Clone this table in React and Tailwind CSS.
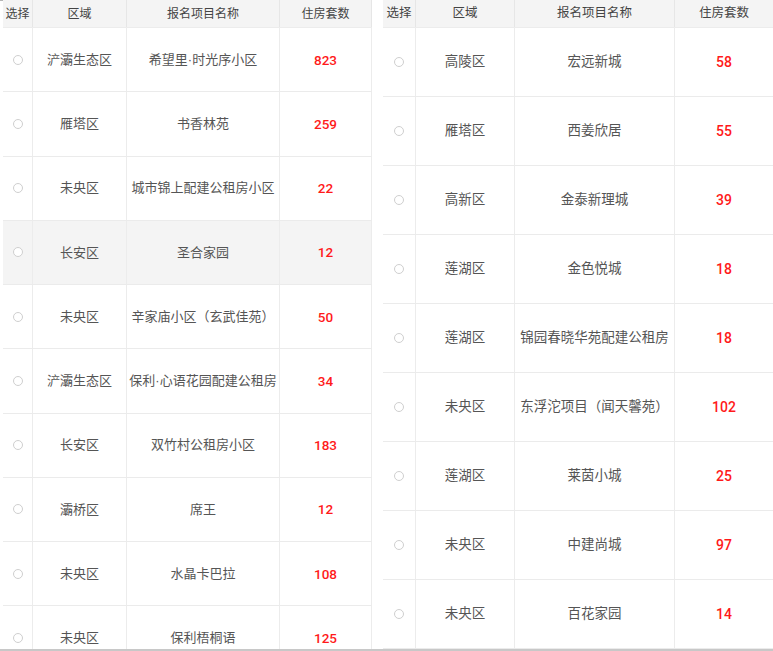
import React from "react";

const left = [
  ["浐灞生态区", "希望里·时光序小区", "823"],
  ["雁塔区", "书香林苑", "259"],
  ["未央区", "城市锦上配建公租房小区", "22"],
  ["长安区", "圣合家园", "12"],
  ["未央区", "辛家庙小区（玄武佳苑）", "50"],
  ["浐灞生态区", "保利·心语花园配建公租房", "34"],
  ["长安区", "双竹村公租房小区", "183"],
  ["灞桥区", "席王", "12"],
  ["未央区", "水晶卡巴拉", "108"],
  ["未央区", "保利梧桐语", "125"],
];

const right = [
  ["高陵区", "宏远新城", "58"],
  ["雁塔区", "西姜欣居", "55"],
  ["高新区", "金泰新理城", "39"],
  ["莲湖区", "金色悦城", "18"],
  ["莲湖区", "锦园春晓华苑配建公租房", "18"],
  ["未央区", "东浮沱项目（闻天馨苑）", "102"],
  ["莲湖区", "莱茵小城", "25"],
  ["未央区", "中建尚城", "97"],
  ["未央区", "百花家园", "14"],
];

const font = { fontFamily: '"Liberation Sans", "Noto Sans CJK SC", sans-serif' };
const numFont = { fontFamily: 'Roboto, "Liberation Sans", sans-serif' };

function Radio() {
  return <span className="block w-[10px] h-[10px] rounded-full border border-[#cfcfcf] bg-white" />;
}

function LeftTable() {
  return (
    <div className="w-[369px] ml-[3px] shrink-0 flex flex-col">
      <div className="flex h-[28px] bg-[#f4f4f4] text-[12px] text-[#444] border-b border-[#ececec]">
        <div className="w-[30px] border-r border-[#e6e6e6] flex items-center justify-center">选择</div>
        <div className="w-[94px] border-r border-[#e6e6e6] flex items-center justify-center">区域</div>
        <div className="w-[153px] border-r border-[#e6e6e6] flex items-center justify-center">报名项目名称</div>
        <div className="w-[92px] border-r border-[#e6e6e6] flex items-center justify-center">住房套数</div>
      </div>
      {left.map((r, i) => (
        <div
          key={i}
          className={`flex h-[64.25px] shrink-0 border-b border-[#ebebeb] text-[13px] text-[#555] ${i === 3 ? "bg-[#f4f4f4]" : "bg-white"}`}
        >
          <div className="w-[30px] border-r border-[#ececec] flex items-center justify-center"><Radio /></div>
          <div className="w-[94px] border-r border-[#ececec] flex items-center justify-center whitespace-nowrap">{r[0]}</div>
          <div className="w-[153px] border-r border-[#ececec] flex items-center justify-center whitespace-nowrap">{r[1]}</div>
          <div className="w-[92px] border-r border-[#ececec] flex items-center justify-center text-[#ff1a1a] font-medium text-[13.5px]" style={numFont}>{r[2]}</div>
        </div>
      ))}
    </div>
  );
}

function RightTable() {
  return (
    <div className="w-[390px] ml-[11px] shrink-0 flex flex-col">
      <div className="flex h-[28px] bg-[#f4f4f4] text-[12.5px] text-[#444] border-b border-[#ececec]">
        <div className="w-[33px] border-r border-[#e6e6e6] flex items-center justify-center">选择</div>
        <div className="w-[99px] border-r border-[#e6e6e6] flex items-center justify-center">区域</div>
        <div className="w-[160px] border-r border-[#e6e6e6] flex items-center justify-center">报名项目名称</div>
        <div className="w-[98px] flex items-center justify-center">住房套数</div>
      </div>
      {right.map((r, i) => (
        <div key={i} className="flex h-[69px] shrink-0 border-b border-[#ebebeb] text-[13.5px] text-[#555] bg-white">
          <div className="w-[33px] border-r border-[#ececec] flex items-center justify-center"><Radio /></div>
          <div className="w-[99px] border-r border-[#ececec] flex items-center justify-center whitespace-nowrap">{r[0]}</div>
          <div className="w-[160px] border-r border-[#ececec] flex items-center justify-center whitespace-nowrap">{r[1]}</div>
          <div className="w-[98px] flex items-center justify-center text-[#ff1a1a] font-medium text-[14px]" style={numFont}>{r[2]}</div>
        </div>
      ))}
    </div>
  );
}

export default function App() {
  return (
    <div className="w-[773px] h-[651px] overflow-hidden bg-white relative" style={font}>
      <div className="flex h-[649px] overflow-hidden items-start">
        <div className="flex flex-col">
          <div className="h-px bg-[#b5b5b5] w-[372px]" />
          <div className="flex -mt-px">
            <LeftTable />
          </div>
        </div>
        <RightTable />
      </div>
      <div className="h-[2px] bg-[#c8c8c8]" />
    </div>
  );
}
